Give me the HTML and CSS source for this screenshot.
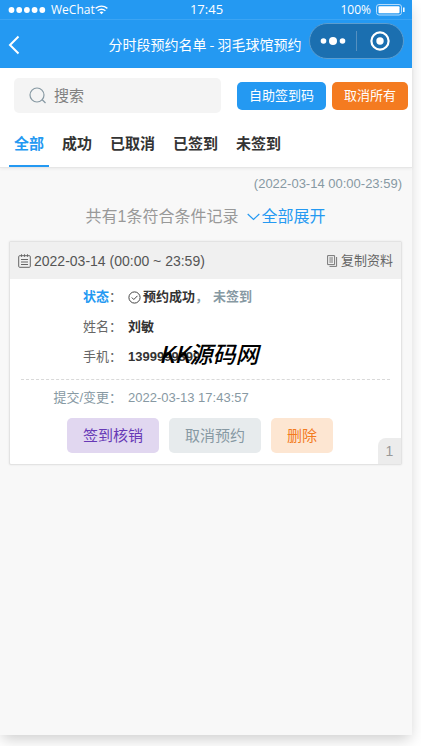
FILE: index.html
```html
<!DOCTYPE html>
<html lang="zh-CN">
<head>
<meta charset="utf-8">
<meta name="viewport" content="width=device-width, initial-scale=1">
<title>分时段预约名单 - 羽毛球馆预约</title>
<link rel="stylesheet" href="styles.css">
</head>
<body>
<div class="phone">
  <header class="top">
    <div class="status">
      <div class="carrier">
        <svg width="38" height="6" viewBox="0 0 37 6" fill="#fff"><circle cx="3" cy="3" r="2.9"/><circle cx="10.7" cy="3" r="2.9"/><circle cx="18.4" cy="3" r="2.9"/><circle cx="26.1" cy="3" r="2.9"/><circle cx="33.8" cy="3" r="2.9"/></svg>
        <span class="network">WeChat</span>
        <svg width="13" height="10" viewBox="0 0 13 10" fill="none" stroke="#fff" stroke-width="1.4"><path d="M.6 3.4Q6.500-1.200 12.400 3.400M2.600 5.800Q6.500 2.800 10.400 5.800"/><path d="M4.500 7.300Q6.500 5.900 8.500 7.300L6.500 9.300Z" fill="#fff" stroke="none"/></svg>
      </div>
      <span class="clock">17:45</span>
      <div class="power">
        <span>100%</span>
        <svg width="29" height="12" viewBox="0 0 29 12"><rect x=".5" y=".5" width="25" height="10.500" rx="2.500" fill="none" stroke="#b5dcfb"/><rect x="2.500" y="2.300" width="21" height="7" rx="1" fill="#fff"/><path d="M27.800 3.500v4.500" stroke="#fff" stroke-width="1.500"/></svg>
      </div>
    </div>
    <nav class="nav">
      <button class="back" type="button" aria-label="返回"><svg width="12" height="20" viewBox="0 0 12 20" fill="none" stroke="#fff" stroke-width="2"><path d="M10.500 1.500L2 10l8.500 8.500"/></svg></button>
      <h1 class="title">分时段预约名单 - 羽毛球馆预约</h1>
      <div class="capsule">
        <button type="button" aria-label="更多"><svg width="26" height="8" viewBox="0 0 26 8" fill="#fff"><circle cx="3.500" cy="4" r="2.800"/><circle cx="13" cy="4" r="4"/><circle cx="22.500" cy="4" r="2.800"/></svg></button>
        <button type="button" aria-label="关闭"><svg width="20" height="20" viewBox="0 0 20 20"><circle cx="10" cy="10" r="8.600" fill="none" stroke="#fff" stroke-width="2.200"/><circle cx="10" cy="10" r="3.700" fill="#fff"/></svg></button>
      </div>
    </nav>
  </header>

  <section class="tools">
    <div class="search-row">
      <label class="search">
        <svg width="18" height="18" viewBox="0 0 18 18" fill="none" stroke="#8799a3" stroke-width="1.200"><circle cx="8" cy="8" r="7"/><path d="M13 12.500l3.500 3.500"/></svg>
        <input type="search" placeholder="搜索" aria-label="搜索">
      </label>
      <div class="quick">
        <button class="small blue" type="button">自助签到码</button>
        <button class="small orange" type="button">取消所有</button>
      </div>
    </div>
    <div class="tabs">
      <button class="tab active" type="button">全部</button>
      <button class="tab" type="button">成功</button>
      <button class="tab" type="button">已取消</button>
      <button class="tab" type="button">已签到</button>
      <button class="tab" type="button">未签到</button>
    </div>
  </section>

  <main class="content">
    <p class="range">(2022-03-14 00:00-23:59)</p>
    <p class="summary">
      <span>共有1条符合条件记录</span>
      <a class="expand" href="#record"><svg width="13" height="8" viewBox="0 0 13 8" fill="none" stroke="currentColor" stroke-width="1.200"><path d="M.7 1l5.800 5.500L12.300 1"/></svg>全部展开</a>
    </p>
    <article class="card" id="record">
      <header class="card-head">
        <div class="slot">
          <svg width="13" height="14" viewBox="0 0 13 14" fill="none" stroke="#666"><rect x=".7" y="1.700" width="11.600" height="11.600" rx="1"/><path d="M3 5.500h7M3 8h7M3 10.500h7M3.500.3v2.500M6.500.3v2.500M9.500.3v2.500"/></svg>
          <span>2022-03-14 (00:00 ~ 23:59)</span>
        </div>
        <button class="copy" type="button"><svg width="11" height="12" viewBox="0 0 11 12" fill="none" stroke="#777"><path d="M.6.600h7v9h-7zM9.600 2v9.400H2.500M2.300 3h3.700M2.300 5h3.700M2.300 7h3.700"/></svg>复制资料</button>
      </header>
      <dl class="rows">
        <div class="row"><dt class="state">状态<i>：</i></dt><dd><svg width="13" height="13" viewBox="0 0 13 13" fill="none" stroke="#444"><circle cx="6.500" cy="6.500" r="5.600"/><path d="M3.800 6.500l2 2 3.700-3.700"/></svg><b>预约成功</b><span class="muted">，</span><span class="muted">未签到</span></dd></div>
        <div class="row"><dt>姓名：</dt><dd><b>刘敏</b></dd></div>
        <div class="row phone-row"><dt>手机：</dt><dd><b>1399999399</b></dd><div class="watermark">KK源码网</div></div>
      </dl>
      <dl class="rows log">
        <div class="row"><dt>提交/变更：</dt><dd>2022-03-13 17:43:57</dd></div>
      </dl>
      <div class="actions">
        <button class="action purple" type="button">签到核销</button>
        <button class="action gray" type="button">取消预约</button>
        <button class="action peach" type="button">删除</button>
      </div>
      <span class="index">1</span>
    </article>
  </main>
</div>
</body>
</html>
```
FILE: styles.css
```css
* { box-sizing: border-box; }

body {
  margin: 0;
  min-height: 100vh;
  padding: 0 9px 11px 0;
  display: flex;
  background: #fff;
  color: #333;
  font: 13px/20px "Liberation Sans", "Noto Sans CJK SC", sans-serif;
  overflow: hidden;
}

h1, p, dl, dd { margin: 0; }
svg { display: block; flex: none; }
a { text-decoration: none; }

button {
  border: 0;
  padding: 0;
  background: none;
  color: inherit;
  font: inherit;
  white-space: nowrap;
}

.phone {
  flex: 1;
  min-width: 0;
  display: flex;
  flex-direction: column;
  background: #f8f8f8;
  box-shadow: 0 6px 14px -2px rgba(0, 0, 0, .2);
}

.top {
  background: #2499f2;
  color: #fff;
}

.status {
  height: 20px;
  padding: 0 7px 0 8px;
  display: grid;
  grid-template-columns: 1fr auto 1fr;
  align-items: center;
  border-bottom: 1px solid #3ba4f4;
  font: 12px/19px "Open Sans", sans-serif;
}

.carrier, .power {
  display: flex;
  align-items: center;
}

.network { margin-left: 5px; }
.clock { font-size: 13px; }

.power {
  justify-content: flex-end;
  gap: 5px;
}

.nav {
  position: relative;
  height: 48px;
  padding: 0 10px 0 8px;
  display: flex;
  align-items: center;
  justify-content: center;
}

.back {
  position: absolute;
  left: 8px;
  top: 15px;
}

.title {
  font-size: 14px;
  font-weight: 400;
  line-height: 20px;
  font-family: "Noto Sans CJK SC", sans-serif;
}

.capsule {
  position: absolute;
  right: 8px;
  top: 3px;
  width: 95px;
  height: 36px;
  display: flex;
  align-items: center;
  border: 1px solid #5b9dcf;
  border-radius: 18px;
  background: #1b6fb0;
}

.capsule button {
  flex: 1;
  height: 20px;
  display: flex;
  align-items: center;
  justify-content: center;
}

.capsule button + button { border-left: 1px solid #5590c0; }

.tools {
  background: #fff;
  border-bottom: 1px solid #e6e6e6;
  box-shadow: 0 1px 3px rgba(0, 0, 0, .06);
}

.search-row {
  padding: 10px 4px 10px 14px;
  display: flex;
  align-items: center;
  gap: 16px;
}

.search {
  flex: 1;
  min-width: 0;
  height: 35px;
  padding: 0 15px;
  display: flex;
  align-items: center;
  gap: 7px;
  border-radius: 5px;
  background: #f4f4f4;
}

.search input {
  flex: 1;
  min-width: 0;
  border: 0;
  padding: 0;
  outline: 0;
  background: none;
  font: inherit;
  font-size: 15px;
}

.search input::placeholder { color: #808080; }

.quick {
  display: flex;
  gap: 6px;
}

.small {
  height: 28px;
  padding: 0 12px;
  border-radius: 5px;
  color: #fff;
}

.blue { background: #2499f2; }
.orange { background: #f47b20; }

.tabs {
  padding: 0 9px;
  display: flex;
  gap: 8px;
}

.tab {
  height: 44px;
  padding: 0 5px;
  border-bottom: 2px solid transparent;
  font-size: 15px;
  font-weight: 700;
}

.tab.active {
  color: #2499f2;
  border-color: #2499f2;
}

.content { padding: 6px 10px 0 9px; }

.range {
  text-align: right;
  color: #8799a3;
}

.summary {
  margin: 10px 0 11px;
  display: flex;
  justify-content: center;
  gap: 9px;
  color: #999;
  font-size: 16px;
  line-height: 26px;
}

.expand {
  display: flex;
  align-items: center;
  gap: 1px;
  color: #2499f2;
}

.card {
  position: relative;
  border: 1px solid #e3e3e3;
  border-radius: 2px;
  background: #fff;
  padding-bottom: 11px;
  box-shadow: 0 0 2px rgba(0, 0, 0, .1);
}

.card-head {
  height: 37px;
  padding: 0 8px;
  display: flex;
  align-items: center;
  justify-content: space-between;
  background: #f0f0f0;
}

.slot {
  display: flex;
  align-items: center;
  gap: 3px;
  color: #555;
  font-size: 14px;
}

.copy {
  display: flex;
  align-items: center;
  gap: 3px;
  color: #666;
}

.rows {
  margin: 0 11px;
  padding: 3px 0 7px;
}

.row {
  display: grid;
  grid-template-columns: 101px 1fr;
  gap: 6px;
  line-height: 30px;
  color: #666;
}

.row dt { text-align: right; }
.row i { color: #666; font-style: normal; font-weight: 400; }
.row b { color: #333; }

.row dd {
  display: flex;
  align-items: center;
}

.row dd svg { margin-right: 2px; }

.row .state {
  color: #2499f2;
  font-weight: 700;
}

.row .muted {
  color: #8799a3;
  font-weight: 700;
}

.row .muted + .muted { margin-left: 5px; }

.phone-row { position: relative; }

.watermark {
  position: absolute;
  left: 138px;
  top: -4px;
  color: #000;
  font-size: 23px;
  font-style: italic;
  font-weight: 500;
  font-family: "Noto Sans CJK SC", sans-serif;
}

.log {
  border-top: 1px dashed #d9d9d9;
  padding: 3px 0 5px;
}

.log .row { color: #8799a3; }

.actions {
  padding: 0 57px;
  display: flex;
  gap: 10px;
}

.action {
  height: 35px;
  padding: 0 16px;
  border-radius: 5px;
  font-size: 15px;
}

.purple { background: #e1d7f0; color: #6739b6; }
.gray { background: #e7ebed; color: #8799a3; }
.peach { background: #fde6d2; color: #f37b1d; }

.index {
  position: absolute;
  right: 0;
  bottom: 0;
  width: 23px;
  border-radius: 8px 0 0 0;
  background: #ececec;
  color: #999;
  font-size: 14px;
  line-height: 26px;
  text-align: center;
}
```
